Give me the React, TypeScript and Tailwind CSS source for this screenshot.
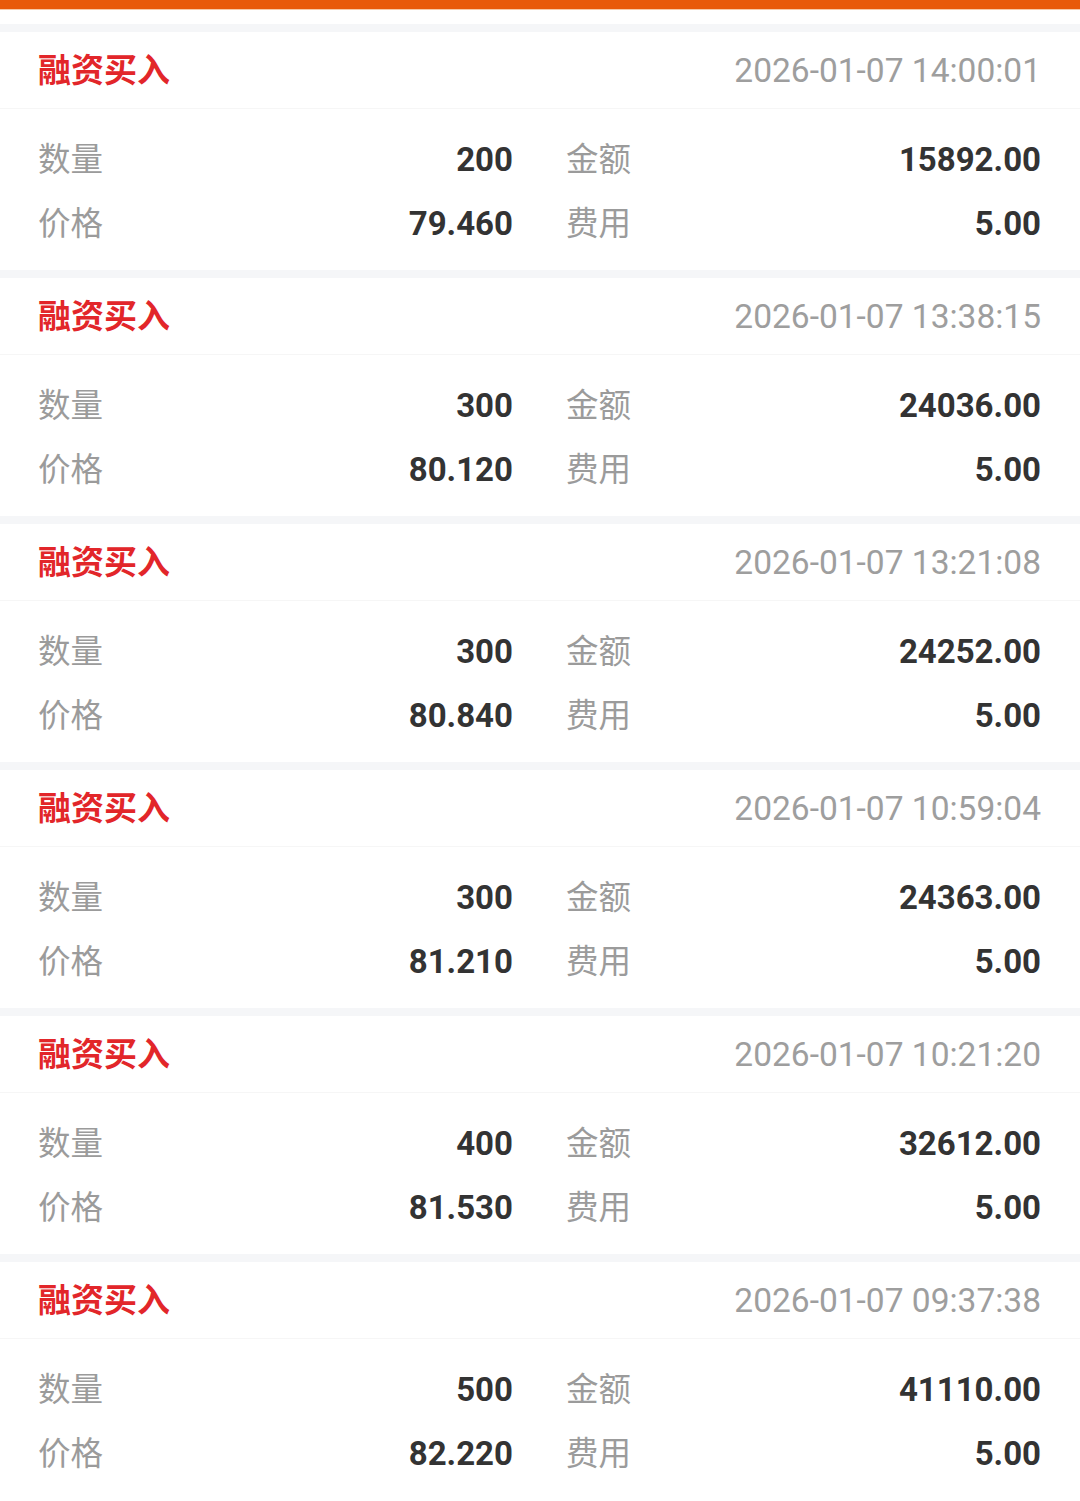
const records = [
  { time: '2026-01-07 14:00:01', qty: '200', amount: '15892.00', price: '79.460', fee: '5.00' },
  { time: '2026-01-07 13:38:15', qty: '300', amount: '24036.00', price: '80.120', fee: '5.00' },
  { time: '2026-01-07 13:21:08', qty: '300', amount: '24252.00', price: '80.840', fee: '5.00' },
  { time: '2026-01-07 10:59:04', qty: '300', amount: '24363.00', price: '81.210', fee: '5.00' },
  { time: '2026-01-07 10:21:20', qty: '400', amount: '32612.00', price: '81.530', fee: '5.00' },
  { time: '2026-01-07 09:37:38', qty: '500', amount: '41110.00', price: '82.220', fee: '5.00' },
];

const font = { fontFamily: 'Roboto, "Noto Sans CJK SC", sans-serif' };

function Cell({ label, value }: { label: string; value: string }) {
  return (
    <div className="flex h-16 items-center justify-between">
      <span className="text-[32.5px] text-[#9b9b9b]">{label}</span>
      <span className="text-[33px] font-bold text-[#333333]">{value}</span>
    </div>
  );
}

export default function App() {
  return (
    <div className="min-h-[1501px] bg-white" style={font}>
      <div className="h-[9px] bg-[#e85a0a]" />
      <div className="h-px bg-[#f6c9a8]" />
      <div className="h-[14px] bg-white" />
      {records.map((r, i) => (
        <div key={i}>
          <div className="h-2 bg-[#f5f6f8]" />
          <div className="flex h-[77px] items-center justify-between border-b border-[#f6f6f6] pl-[38px] pr-[39px] pt-[2px]">
            <span className="text-[33px] font-bold text-[#e2262a]">融资买入</span>
            <span className="text-[33.5px] text-[#9e9e9e]">{r.time}</span>
          </div>
          <div className="grid grid-cols-2 gap-x-[53px] pb-[14px] pl-[38px] pr-[39px] pt-[19px]">
            <Cell label="数量" value={r.qty} />
            <Cell label="金额" value={r.amount} />
            <Cell label="价格" value={r.price} />
            <Cell label="费用" value={r.fee} />
          </div>
        </div>
      ))}
    </div>
  );
}
